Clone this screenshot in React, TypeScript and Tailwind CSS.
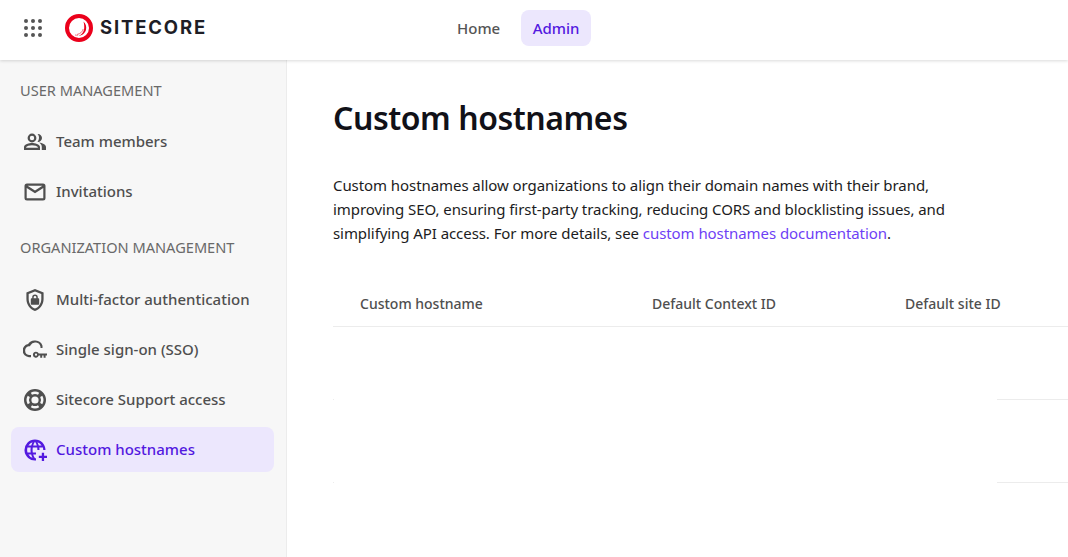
const ICONS: Record<string, string> = {
  team: "M16.2 12.6c2.9.5 6.8 1.9 6.8 4.4v3h-4.2v-3c0-1.8-1.1-3.3-2.6-4.4zM14.5 4.1c2.3-.3 4.5 1.5 4.5 3.9s-2.2 4.2-4.5 3.9A6.6 6.6 0 0 0 16 8c0-1.5-.5-2.8-1.5-3.9zM9 3.6a4.4 4.4 0 1 1 0 8.8 4.4 4.4 0 0 1 0-8.8zm0 2.2a2.2 2.2 0 1 0 0 4.4 2.2 2.2 0 0 0 0-4.4zM9 13c-2.67 0-8 1.34-8 4v3h16v-3c0-2.66-5.33-4-8-4zm5.8 4.8H3.2v-.7C3.6 16.2 6.5 15.2 9 15.2s5.4 1 5.8 1.9v.7z",
  mail: "M4 3.5h16A2.5 2.5 0 0 1 22.5 6v12a2.5 2.5 0 0 1-2.5 2.5H4A2.5 2.5 0 0 1 1.5 18V6A2.5 2.5 0 0 1 4 3.5zm.6 2.2L12 10.6l7.4-4.9H4.6zM20.3 8 12 13.3 3.7 8v10.3h16.6V8z",
  shield: "M12 1 3.4 4.4v6.7c0 5.5 3.6 10.5 8.6 11.9 5-1.4 8.6-6.4 8.6-11.9V4.4L12 1zm6.3 10.1c0 4.4-2.7 8.3-6.3 9.5-3.6-1.2-6.3-5.1-6.3-9.5V6L12 3.5 18.3 6v5.1zM9.2 10.3v-1a2.8 2.8 0 0 1 5.600 0v1h.4c.6 0 1 .4 1 1v4.400c0 .6-.4 1-1 1H8.800c-.6 0-1-.4-1-1v-4.400c0-.6.4-1 1-1h.4zm1.500 0h2.600v-1a1.300 1.300 0 0 0-2.600 0v1z",
  cloud: "M12.500 2.500a7.500 7.500 0 0 1 7 5.300v2.300h-2V8.800a5.400 5.400 0 0 0-10-1.600l-.5 1-1.200.1A4.400 4.400 0 0 0 6 17h2v2.200H6A6.600 6.600 0 0 1 5.100 6.100 7.500 7.500 0 0 1 12.500 2.500zM13 13.700a3 3 0 0 1 2.800 1.900H24v2h-1.400v2.200h-2v-2.200h-1.400v2.200h-2v-2.200h-1.400A3 3 0 1 1 13 13.700zm0 1.900a1.100 1.100 0 1 0 0 2.200 1.100 1.100 0 0 0 0-2.200z",
  support: "M12 1a11 11 0 1 0 0 22 11 11 0 0 0 0-22zM12 8.400a3.600 3.600 0 1 1 0 7.200 3.600 3.600 0 0 1 0-7.200zM7.800 4.730A8.400 8.400 0 0 1 16.200 4.730L15 6.800A6 6 0 0 0 9 6.800zM19.270 7.800A8.400 8.400 0 0 1 19.270 16.200L17.200 15A6 6 0 0 0 17.200 9zM16.200 19.270A8.400 8.400 0 0 1 7.800 19.270L9 17.200A6 6 0 0 0 15 17.200zM4.730 16.200A8.400 8.400 0 0 1 4.730 7.800L6.800 9A6 6 0 0 0 6.800 15z",
  globe: "M12 1.500a10.500 10.500 0 1 0 1 20.950V20.300c-.3.02-.7 0-1 0-.8-1.200-1.400-2.500-1.800-3.900H13v-2H9.800a13.500 13.500 0 0 1 0-4.800h4.400c.1.700.2 1.500.2 2.400h2.100c0-.8-.1-1.600-.2-2.400h3.600c.2.700.3 1.500.3 2.400h2.300C22.500 6.200 17.800 1.500 12 1.500zM4.500 14.400a8.300 8.300 0 0 1 0-4.800h3.200a15.700 15.700 0 0 0 0 4.800H4.500zm.9 2h2.800c.3 1.200.8 2.300 1.300 3.400a8.400 8.400 0 0 1-4.100-3.400zm2.800-8.800H5.400a8.400 8.400 0 0 1 4.100-3.400c-.5 1.100-1 2.200-1.300 3.400zM12 3.700c.8 1.200 1.400 2.500 1.800 3.900h-3.600c.4-1.400 1-2.700 1.800-3.900zM14.500 4.200a8.400 8.400 0 0 1 4.100 3.400h-2.800c-.3-1.200-.8-2.300-1.300-3.400zM18.800 14.800h2.300v3h3v2.300h-3v3h-2.300v-3h-3v-2.300h3v-3z",
};

function NavIcon({ name, className }: { name: string; className?: string }) {
  return (
    <svg viewBox="0 0 24 24" fill="currentColor" className={`h-6 w-6 shrink-0 ${className ?? ""}`} aria-hidden>
      <path d={ICONS[name]} fillRule="evenodd" />
    </svg>
  );
}

function SitecoreMark() {
  return (
    <svg viewBox="0 0 28 28" className="h-7 w-7" aria-hidden>
      <circle cx="14" cy="14" r="12" fill="none" stroke="#eb001b" strokeWidth="4" />
      <path d="M18.500 7.500c2.300 2.200 3.200 5.200 2.500 8.300-.8 3.300-3.700 5.700-7.500 6.200 2.800-1.400 4.900-3.400 5.500-6.300.5-2.700.2-5.400-.5-8.200z" fill="#eb001b" />
      <path d="M12 20.500c3.500-.8 5.600-2.800 6.200-5.500M10 21c1 .2 2 .3 3 .1" fill="none" stroke="#f3717f" strokeWidth="1" />
    </svg>
  );
}

function NavItem({ icon, label, active }: { icon: string; label: string; active?: boolean }) {
  return (
    <div
      className={`flex h-[45px] items-center gap-[9px] rounded-lg px-3 text-[15px] font-medium ${
        active ? "bg-[#ece7fd] text-[#5319e0]" : "text-[#4f4f4f]"
      }`}
    >
      <NavIcon name={icon} />
      <span>{label}</span>
    </div>
  );
}

function RowLine({ height }: { height: string }) {
  return (
    <div className={`flex items-end justify-between ${height}`}>
      <div className="h-px w-px bg-[#ececec]" />
      <div className="h-px w-[71px] bg-[#ececec]" />
    </div>
  );
}

export default function App() {
  return (
    <div className="flex h-[557px] w-[1068px] flex-col overflow-hidden bg-white font-['Noto_Sans',sans-serif] text-[#14141a]">
      <header className="relative z-10 flex h-[60px] shrink-0 items-center bg-white pb-1 pl-6 shadow-[0_1px_3px_rgba(0,0,0,0.15)]">
        <div className="grid w-[18px] grid-cols-3 gap-[3px]">
          {Array.from({ length: 9 }).map((_, i) => (
            <span key={i} className="h-1 w-1 rounded-full bg-[#555]" />
          ))}
        </div>
        <div className="ml-[23px] flex items-center gap-[7px]">
          <SitecoreMark />
          <span className="font-['Inter',sans-serif] text-[18.5px] font-bold tracking-[0.1em] text-[#1e1e26]">SITECORE</span>
        </div>
        <nav className="ml-[239px] flex items-center gap-[10px] text-[15px] font-medium">
          <div className="flex h-9 items-center rounded-lg px-[11px] text-[#555]">Home</div>
          <div className="flex h-9 items-center rounded-lg bg-[#ece7fd] px-[11.5px] text-[#5319e0]">Admin</div>
        </nav>
      </header>
      <div className="flex min-h-0 flex-1">
        <aside className="flex w-[287px] shrink-0 flex-col border-r border-[#ececec] bg-[#f7f7f7] pr-3 pl-[11px]">
          <h2 className="mt-5 pl-[9px] text-[14.6px] leading-5 text-[#696969]">USER MANAGEMENT</h2>
          <div className="mt-[19px] flex flex-col gap-[5px]">
            <NavItem icon="team" label="Team members" />
            <NavItem icon="mail" label="Invitations" />
          </div>
          <h2 className="mt-[23px] pl-[9px] text-[14.6px] leading-5 text-[#696969]">ORGANIZATION MANAGEMENT</h2>
          <div className="mt-5 flex flex-col gap-[5px]">
            <NavItem icon="shield" label="Multi-factor authentication" />
            <NavItem icon="cloud" label="Single sign-on (SSO)" />
            <NavItem icon="support" label="Sitecore Support access" />
            <NavItem icon="globe" label="Custom hostnames" active />
          </div>
        </aside>
        <main className="min-w-0 flex-1 pl-[46px]">
          <h1 className="mt-9 text-[32px] leading-[44px] font-semibold tracking-[-0.45px] text-[#111118]">Custom hostnames</h1>
          <p className="mt-[33px] w-[630px] text-[15px] leading-6 tracking-[-0.07px] text-[#1c1c22]">
            Custom hostnames allow organizations to align their domain names with their brand, improving SEO, ensuring first-party tracking, reducing CORS and blocklisting issues, and simplifying API access. For more details, see{" "}
            <a className="text-[#6e3ff5]">custom hostnames documentation</a>.
          </p>
          <div className="mt-9 flex h-[46px] items-center border-b border-[#ececec] text-sm font-medium text-[#4f4f4f]">
            <div className="w-[319px] pl-[27px]">Custom hostname</div>
            <div className="w-[253px]">Default Context ID</div>
            <div>Default site ID</div>
          </div>
          <RowLine height="h-[73px]" />
          <RowLine height="h-[83px]" />
        </main>
      </div>
    </div>
  );
}
